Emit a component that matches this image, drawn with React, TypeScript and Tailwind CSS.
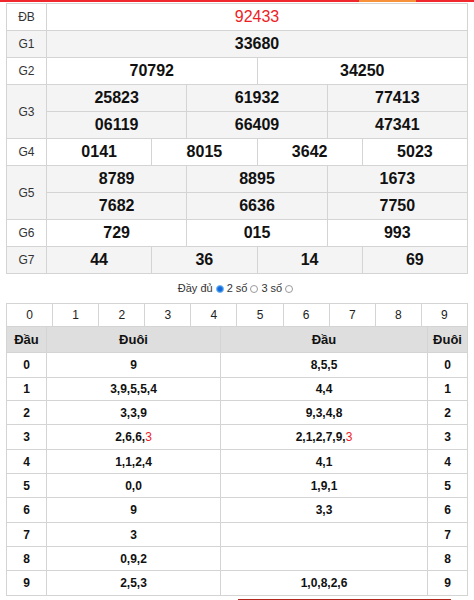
const font = { fontFamily: '"Liberation Sans", Arial, sans-serif' };

type Row = { label: string; gray: boolean; lines: string[][]; red?: boolean };

const results: Row[] = [
  { label: "ĐB", gray: false, lines: [["92433"]], red: true },
  { label: "G1", gray: true, lines: [["33680"]] },
  { label: "G2", gray: false, lines: [["70792", "34250"]] },
  { label: "G3", gray: true, lines: [["25823", "61932", "77413"], ["06119", "66409", "47341"]] },
  { label: "G4", gray: false, lines: [["0141", "8015", "3642", "5023"]] },
  { label: "G5", gray: true, lines: [["8789", "8895", "1673"], ["7682", "6636", "7750"]] },
  { label: "G6", gray: false, lines: [["729", "015", "993"]] },
  { label: "G7", gray: true, lines: [["44", "36", "14", "69"]] },
];

const cols: Record<number, string> = {
  1: "grid-cols-1",
  2: "grid-cols-2",
  3: "grid-cols-3",
  4: "grid-cols-4",
};

// dau / duoi, "3" in red where it matches the special prize tail
const loto = [
  { n: "0", duoi: "9", dau: "8,5,5", h: "h-[25px]" },
  { n: "1", duoi: "3,9,5,5,4", dau: "4,4", h: "h-[23px]" },
  { n: "2", duoi: "3,3,9", dau: "9,3,4,8", h: "h-[24px]" },
  { n: "3", duoi: "2,6,6,", dau: "2,1,2,7,9,", hot: true, h: "h-[25px]" },
  { n: "4", duoi: "1,1,2,4", dau: "4,1", h: "h-[24px]" },
  { n: "5", duoi: "0,0", dau: "1,9,1", h: "h-[24px]" },
  { n: "6", duoi: "9", dau: "3,3", h: "h-[25px]" },
  { n: "7", duoi: "3", dau: "", h: "h-[24px]" },
  { n: "8", duoi: "0,9,2", dau: "", h: "h-[24px]" },
  { n: "9", duoi: "2,5,3", dau: "1,0,8,2,6", h: "h-[25px]" },
];

function Radio({ on }: { on?: boolean }) {
  if (on)
    return (
      <span className="inline-flex w-[8px] h-[8px] rounded-full bg-[#1a7fe6] border border-[#7cb6f2] items-center justify-center mx-[3px]">
        <span className="w-[4px] h-[4px] rounded-full bg-[#1565d8]" />
      </span>
    );
  return <span className="inline-block w-[8px] h-[8px] rounded-full border border-[#9a9a9a] bg-white mx-[3px]" />;
}

export default function App() {
  return (
    <div className="bg-white w-[474px] h-[600px] overflow-hidden text-[#111]" style={font}>
      {/* top stripe */}
      <div className="flex h-[2px]">
        <div className="w-[359px] bg-[#f0282d]" />
        <div className="w-[57px] bg-[#f7923a]" />
        <div className="flex-1 bg-[#f0282d]" />
      </div>

      {/* results table */}
      <div className="mx-[6px] mt-[1px] border-l border-t border-[#d4d4d4]">
        {results.map((r) => (
          <div key={r.label} className={`flex ${r.gray ? "bg-[#f4f4f4]" : "bg-white"}`}>
            <div className="w-[40px] shrink-0 border-r border-b border-[#d4d4d4] flex items-center justify-center text-[12px] text-[#333]">
              {r.label}
            </div>
            <div className="flex-1">
              {r.lines.map((line, i) => (
                <div key={i} className={`grid ${cols[line.length]} h-[27px]`}>
                  {line.map((v, j) => (
                    <div
                      key={j}
                      className={`border-r border-b border-[#d4d4d4] flex items-center justify-center text-[16px] ${
                        r.red ? "text-[#ee1c25] font-normal" : "font-bold"
                      }`}
                    >
                      {v}
                    </div>
                  ))}
                </div>
              ))}
            </div>
          </div>
        ))}
      </div>

      {/* mode selector */}
      <div className="h-[29px] flex items-center justify-center text-[11px] text-[#333]">
        <span>Đầy đủ</span>
        <Radio on />
        <span>2 số</span>
        <Radio />
        <span>3 số</span>
        <Radio />
      </div>

      {/* loto table */}
      <div className="mx-[6px] border-l border-t border-[#d4d4d4]">
        <div className="grid grid-cols-10 h-[23px] text-[12px] text-[#222]">
          {["0", "1", "2", "3", "4", "5", "6", "7", "8", "9"].map((d) => (
            <div key={d} className="border-r border-b border-[#d4d4d4] flex items-center justify-center">
              {d}
            </div>
          ))}
        </div>
        <div className="grid grid-cols-[40px_174px_1fr_40px] h-[26px] bg-[#dedede] text-[13px] font-bold">
          <div className="border-r border-b border-[#d4d4d4] flex items-center justify-center">Đầu</div>
          <div className="border-r border-b border-[#d4d4d4] flex items-center justify-center">Đuôi</div>
          <div className="border-r border-b border-[#d4d4d4] flex items-center justify-center">Đầu</div>
          <div className="border-r border-b border-[#d4d4d4] flex items-center justify-center">Đuôi</div>
        </div>
        {loto.map((l) => (
          <div key={l.n} className={`grid grid-cols-[40px_174px_1fr_40px] ${l.h} text-[12px] font-bold`}>
            <div className="border-r border-b border-[#d4d4d4] flex items-center justify-center">{l.n}</div>
            <div className="border-r border-b border-[#d4d4d4] flex items-center justify-center">
              {l.duoi}
              {l.hot && <span className="text-[#ee1c25] font-normal">3</span>}
            </div>
            <div className="border-r border-b border-[#d4d4d4] flex items-center justify-center">
              {l.dau}
              {l.hot && <span className="text-[#ee1c25] font-normal">3</span>}
            </div>
            <div className="border-r border-b border-[#d4d4d4] flex items-center justify-center">{l.n}</div>
          </div>
        ))}
      </div>

      <div className="ml-[238px] mt-[3px] w-[213px] h-[1px] bg-[#b3261e]" />
    </div>
  );
}
